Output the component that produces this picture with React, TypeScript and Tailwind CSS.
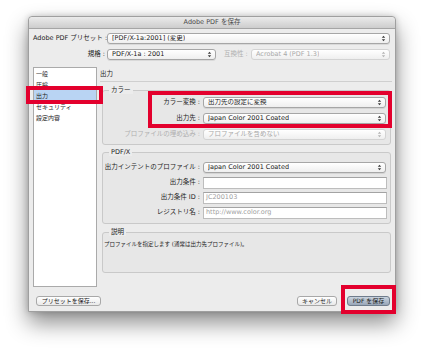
import React from "react";
import { clsx } from "clsx";

const Arrows = ({ dim }: { dim?: boolean }) => (
  <svg width="5" height="7" viewBox="0 0 5 7" className="shrink-0">
    <path
      d="M0.8 2.8 L2.5 0.8 L4.2 2.8 Z M0.8 4.2 L2.5 6.2 L4.2 4.2 Z"
      fill={dim ? "#b4b4b4" : "#3a3a3a"}
    />
  </svg>
);

const Select = ({
  value,
  className,
  disabled,
}: {
  value: string;
  className?: string;
  disabled?: boolean;
}) => (
  <div
    className={clsx(
      "flex h-[11px] items-center justify-between rounded-[3px] border pl-[4px] pr-[3px] bg-linear-to-b from-white to-[#efefef]",
      disabled
        ? "border-[#d3d3d3] text-[#a9a9a9]"
        : "border-[#a6a6a6] text-[#1c1c1c] shadow-[0_1px_0_rgba(0,0,0,0.08)]",
      className
    )}
  >
    <span className="truncate leading-none">{value}</span>
    <Arrows dim={disabled} />
  </div>
);

const Field = ({ value }: { value?: string }) => (
  <div className="flex h-[12px] w-[184px] items-center border border-[#bdbdbd] border-t-[#a3a3a3] bg-white pl-[2px] leading-none text-[#a0a0a0]">
    {value}
  </div>
);

const Row = ({
  label,
  dim,
  children,
}: {
  label: string;
  dim?: boolean;
  children: React.ReactNode;
}) => (
  <div className="flex h-[11px] items-center">
    <span
      className={clsx(
        "w-[97px] whitespace-nowrap text-right leading-none",
        dim ? "text-[#b0b0b0]" : "text-[#1c1c1c]"
      )}
    >
      {label} :
    </span>
    <div className="ml-[3px]">{children}</div>
  </div>
);

const Group = ({
  title,
  className,
  children,
}: {
  title: string;
  className?: string;
  children: React.ReactNode;
}) => (
  <fieldset
    className={clsx(
      "ml-[2px] w-[289px] rounded-[3px] border border-[#c9c9c9] bg-[#e7e7e7]",
      className
    )}
  >
    <legend className="ml-[6px] bg-[#ececec] px-[2px] text-[6.5px] leading-[8px] text-[#1c1c1c]">
      {title}
    </legend>
    {children}
  </fieldset>
);

const menu = ["一般", "圧縮", "出力", "セキュリティ", "設定内容"];

export default function App() {
  return (
    <div className="h-[351px] w-[425px] overflow-hidden bg-white pl-[28px] pt-[16px] font-['DejaVu_Sans','Noto_Sans_CJK_JP',sans-serif] text-[6.5px]">
      <div className="relative flex h-[296px] w-[368px] flex-col rounded-t-[4px] border border-[#9f9f9f] bg-[#ececec] shadow-[0_11px_22px_rgba(0,0,0,0.45),0_0_6px_rgba(0,0,0,0.2)]">
        {/* title bar */}
        <div className="flex h-[12px] items-center justify-center rounded-t-[4px] border-b border-[#a5a5a5] bg-linear-to-b from-[#ebebeb] to-[#cdcdcd] text-[6.5px] leading-none text-[#4a4a4a]">
          Adobe PDF を保存
        </div>

        <div className="flex flex-col pl-[4px] pt-[4px]">
          <div className="flex h-[11px] items-center">
            <span className="w-[72px] whitespace-nowrap text-right leading-none text-[#1c1c1c]">
              Adobe PDF プリセット :
            </span>
            <Select
              value="[PDF/X-1a:2001] (変更)"
              className="ml-[2px] w-[283px]"
            />
          </div>

          <div className="mt-[5px] flex h-[11px] items-center">
            <span className="w-[72px] text-right leading-none text-[#1c1c1c]">
              規格 :
            </span>
            <Select value="PDF/X-1a : 2001" className="ml-[2px] w-[109px]" />
            <span className="ml-[8px] w-[25px] whitespace-nowrap leading-none text-[#b0b0b0]">
              互換性 :
            </span>
            <Select
              value="Acrobat 4 (PDF 1.3)"
              disabled
              className="ml-[2px] w-[139px]"
            />
          </div>

          <div className="mt-[7px] flex">
            {/* sidebar */}
            <div className="h-[220px] w-[64px] border border-[#aaaaaa] bg-white">
              {menu.map((m) => (
                <div
                  key={m}
                  className={clsx(
                    "flex h-[11px] items-center pl-[2px] text-[6px] leading-none text-[#1c1c1c]",
                    m === "出力" && "bg-[#b9d4f3]"
                  )}
                >
                  {m}
                </div>
              ))}
            </div>

            {/* right panel */}
            <div className="ml-[3px] flex w-[292px] flex-col">
              <div className="flex h-[15px] items-center border-b border-[#cfcfcf] leading-none text-[#1c1c1c]">
                出力
              </div>

              <Group title="カラー" className="mt-[4px]">
                <div className="mt-[3px] flex flex-col gap-[5px] pb-[4px]">
                  <Row label="カラー変換">
                    <Select value="出力先の設定に変換" className="w-[183px]" />
                  </Row>
                  <Row label="出力先">
                    <Select
                      value="Japan Color 2001 Coated"
                      className="w-[183px]"
                    />
                  </Row>
                  <Row label="プロファイルの埋め込み" dim>
                    <Select
                      value="プロファイルを含めない"
                      disabled
                      className="w-[183px]"
                    />
                  </Row>
                </div>
              </Group>

              <Group title="PDF/X" className="mt-[3px]">
                <div className="mt-[6px] flex flex-col gap-[4px] pb-[5px]">
                  <Row label="出力インテントのプロファイル">
                    <Select
                      value="Japan Color 2001 Coated"
                      className="w-[183px]"
                    />
                  </Row>
                  <Row label="出力条件">
                    <Field />
                  </Row>
                  <Row label="出力条件 ID">
                    <Field value="JC200103" />
                  </Row>
                  <Row label="レジストリ名">
                    <Field value="http://www.color.org" />
                  </Row>
                </div>
              </Group>

              <Group title="説明" className="mt-[4px] h-[45px]">
                <p className="mt-[4px] pl-[1px] text-[5.5px] leading-[8px] text-[#1c1c1c]">
                  プロファイルを指定します (通常は出力先プロファイル)。
                </p>
              </Group>
            </div>
          </div>

          {/* buttons */}
          <div className="mt-[9px] flex items-center pr-[5px]">
            <button className="ml-[3px] flex h-[10px] w-[65px] items-center justify-center rounded-[3px] border border-[#a8a8a8] bg-linear-to-b from-white to-[#e9e9e9] text-[6px] leading-none text-[#1c1c1c]">
              プリセットを保存...
            </button>
            <button className="ml-auto flex h-[10px] w-[40px] items-center justify-center rounded-[3px] border border-[#a8a8a8] bg-linear-to-b from-white to-[#e9e9e9] text-[6px] leading-none text-[#1c1c1c]">
              キャンセル
            </button>
            <button className="ml-[10px] flex h-[10px] w-[43px] items-center justify-center rounded-[3px] border border-[#6f7c8c] bg-linear-to-b from-[#c9d3de] to-[#98a6b8] text-[6px] leading-none text-[#1c1c1c]">
              PDF を保存
            </button>
          </div>
        </div>

        {/* red highlight frames */}
        <div className="pointer-events-none absolute left-[-3px] top-[69px] h-[18px] w-[77px] border-[4px] border-[#e3002d]" />
        <div className="pointer-events-none absolute left-[119px] top-[74px] h-[37px] w-[244px] border-[4px] border-[#e3002d]" />
        <div className="pointer-events-none absolute left-[312px] top-[268px] h-[29px] w-[55px] border-[4px] border-[#e3002d]" />
      </div>
    </div>
  );
}
